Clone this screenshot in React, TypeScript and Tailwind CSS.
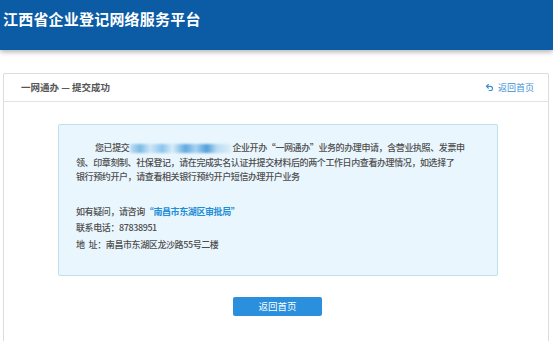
import { Undo2 } from "lucide-react";

const font = { fontFamily: '"Noto Sans CJK SC", "Noto Sans", sans-serif' };

function Blurred() {
  return (
    <span className="relative inline-block align-middle w-[101px] h-[9px] mx-[1px]">
      <span className="absolute inset-0 blur-[1px] bg-[linear-gradient(90deg,#c3e0f4_0%,#7ab9e6_10%,#cfe7f7_20%,#8cc4ec_32%,#d9edf9_42%,#5fa9df_55%,#a9d3f0_65%,#4f9fda_76%,#b9dcf3_86%,#dcedf9_100%)]" />
    </span>
  );
}

export default function App() {
  return (
    <div className="h-[341px] overflow-hidden bg-white" style={font}>
      <header className="h-[50px] bg-[#0b5ca5] shadow-[0_2px_5px_rgba(0,0,0,0.3)] flex items-start pt-[8px] pl-[3px]">
        <h1 className="text-[15px] leading-[22px] font-bold text-white tracking-[0.2px]">
          江西省企业登记网络服务平台
        </h1>
      </header>

      <div className="pt-[23px] px-[3px]">
        <div className="w-[546px] border border-[#dcdcdc] rounded-[2px] h-[280px]">
          <div className="h-[28px] border-b border-[#e3e3e3] flex items-center justify-between pl-[17px] pr-[14px]">
            <span className="text-[9.5px] font-bold text-[#555]">一网通办 — 提交成功</span>
            <a className="flex items-center gap-[4px] text-[9px] text-[#3d8fd6]">
              <Undo2 size={9} strokeWidth={3} />
              返回首页
            </a>
          </div>

          <div className="ml-[54px] mt-[22px] w-[440px] h-[152px] bg-[#eaf6fd] border border-[#bde1ee] rounded-[2px] pt-[16px] pl-[17px] text-[9px] font-medium text-[#4d4d4d] tracking-[-0.4px]">
            <div className="leading-[14.5px] whitespace-nowrap">
              <div className="pl-[19px]">
                您已提交<Blurred />企业开办“一网通办”业务的办理申请，含营业执照、发票申
              </div>
              <div>领、印章刻制、社保登记，请在完成实名认证并提交材料后的两个工作日内查看办理情况，如选择了</div>
              <div>银行预约开户，请查看相关银行预约开户短信办理开户业务</div>
            </div>
            <div className="mt-[19px] leading-[16.5px] whitespace-nowrap">
              <div>
                如有疑问，请咨询<span className="text-[#1f8ed6] font-bold">“南昌市东湖区审批局”</span>
              </div>
              <div>联系电话：87838951</div>
              <div>
                地<span className="inline-block w-[4px]" />址：南昌市东湖区龙沙路55号二楼
              </div>
            </div>
          </div>

          <div className="flex justify-center mt-[21px] pl-[3px]">
            <button className="w-[89px] h-[19px] bg-[#2a8fdc] rounded-[2px] text-white text-[9.5px] leading-[19px]">
              返回首页
            </button>
          </div>
        </div>
      </div>
    </div>
  );
}
